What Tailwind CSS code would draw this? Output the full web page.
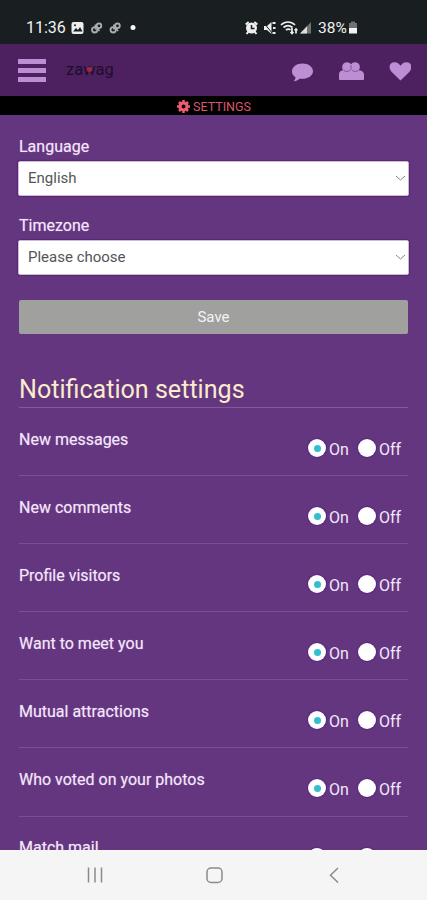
<!DOCTYPE html>
<html lang="en">
<head>
<meta charset="utf-8">
<title>Settings</title>
<script src="https://cdn.jsdelivr.net/npm/@tailwindcss/browser@4"></script>
</head>
<body class="w-[427px] h-[900px] overflow-hidden bg-[#653680] font-[Roboto,sans-serif] text-[#f3e6fa]">
<div class="flex h-[900px] flex-col">
  <div class="flex h-11 shrink-0 items-center bg-[#191e21] pt-[11px] pl-[26px] text-[#f2f2f2]">
    <span class="w-[45px] text-[16px] leading-5 whitespace-nowrap">11:36</span>
    <svg class="h-4 w-[70px] shrink-0" viewBox="0 0 70 16" fill="none">
      <rect x="0.5" y="2" width="12" height="12" rx="2" fill="#eee"/><path d="M2 11.5l3-3.500 2 2 2-3 2.500 4.500z" fill="#191e21"/><circle cx="4" cy="5.200" r="1" fill="#191e21"/>
      <g id="link" stroke="#a9adaf" stroke-width="1.800"><circle cx="23.700" cy="9.800" r="2.700"/><circle cx="28" cy="5.800" r="2.300"/><path d="M24.500 4.500v5M25.500 7.500l3 3.500"/></g>
      <use href="#link" x="18.500"/>
      <circle cx="62" cy="7.500" r="2.500" fill="#f5f5f5"/>
    </svg>
    <svg class="ml-[104px] h-4 w-[70px] shrink-0" viewBox="0 0 70 16" fill="none" stroke="#eee">
      <circle cx="6.500" cy="8" r="5.500" fill="#eee" stroke="none"/><path d="M0.700 4.500l3-2.500M12.300 4.500l-3-2.500M1.500 14l2-2.500M11.500 14l-2-2.500" stroke-width="2"/><path d="M6.500 5v3.500h3" stroke="#191e21" stroke-width="1.500"/>
      <path d="M19 6h3l4.500-4v12L22 10h-3z" fill="#eee" stroke="none"/><path d="M18.500 2.500l9 11" stroke="#191e21" stroke-width="1"/><path d="M27.500 3h3M28 8h2.500M27.500 13h3" stroke-width="2"/>
      <path d="M36 5c4-4 10-4 14 0M38.500 7.500c3-2.500 6-2.500 9 0M41 10c2-1.500 3-1.500 4.500 0M47 8v5.500M45.500 12l1.500 1.500 1.500-1.500M51 13.500V9M49.700 10.500L51 9l1.300 1.500" stroke-width="1.700"/>
      <path d="M55 13.500L66 2v11.500z" fill="#6d7275" stroke="none"/><path d="M55 13.500l7-7.300v7.300z" fill="#ddd" stroke="none"/>
    </svg>
    <span class="ml-[3px] w-[30px] text-[15.5px] leading-5 whitespace-nowrap">38%</span>
    <svg class="h-4 w-2.5 shrink-0" viewBox="0 0 10 16"><path d="M1 3h2V1.500h4V3h2v5H1z" fill="#6d7275"/><path d="M1 8h8v5.500H1z" fill="#f2f2f2"/></svg>
  </div>
  <header class="flex h-[52px] shrink-0 items-center bg-[#4d215f] pr-4 pl-[18px] text-[#be8ed5]">
    <div class="flex flex-col gap-[4px]">
      <i class="h-[5px] w-7 bg-current"></i><i class="h-[5px] w-7 bg-current"></i><i class="h-[5px] w-7 bg-current"></i>
    </div>
    <div class="ml-5 flex items-baseline text-[16.5px] leading-5 text-[#200d2d]">za<span class="relative">w<i class="absolute top-[7px] left-[4px] size-[5px] rounded-full bg-[#a52b30]"></i></span>ag</div>
    <svg class="mt-[5px] ml-auto h-[22px] w-[120px]" viewBox="0 0 120 22" fill="currentColor">
      <path d="M11.500 1.500C5.500 1.500 1 5 1 9.300c0 2.500 1.200 4.500 3.500 6 0 1.500-.7 2.800-1.800 3.900 2.500-.2 4.300-1 5.800-2.500 7.500 1 13.500-2.500 13.500-7.400 0-4.300-4.500-7.800-10.500-7.800z"/>
      <path d="M48 17V12.500c0-2.500 1.500-4 4-4.300-2-3.700 0-8 3.900-8 2 0 3.300.8 4.100 2.100C61 1 62.300.2 64.200.2c4 0 5.800 4.300 3.800 8 3.300.3 5 2 5 4.300V17c0 .7-.5 1-1 1H49c-.6 0-1-.3-1-1z"/>
      <path d="M52.500 8.300c2.300 1.500 4.500 1.500 6.800 0M61 8.300c2.200 1.500 4.500 1.500 6.700 0M60 3v5" fill="none" stroke="#7d4f93" stroke-width=".9"/>
      <path d="M109.500 18.500L101 10.200C96.500 5.500 98.800.3 103.500.3c3 0 4.700 1.700 6 3.500 1.400-1.800 3-3.500 6-3.500 4.800 0 7 5.200 2.500 9.900z"/>
    </svg>
  </header>
  <div class="flex h-[19px] shrink-0 items-center justify-center gap-[3px] bg-black pt-[2px] pl-px text-[12.5px] leading-4 text-[#d9566e]">
    <svg class="size-[13px]" viewBox="0 0 26 26"><circle cx="13" cy="13" r="7" fill="none" stroke="#f15b72" stroke-width="6"/><path d="M13 0v6M13 20v6M0 13h6M20 13h6M4 4l4 4M18 18l4 4M22 4l-4 4M8 18l-4 4" stroke="#f15b72" stroke-width="5"/></svg>
    <span>SETTINGS</span>
  </div>
  <main class="min-h-0 flex-1 overflow-hidden px-[19px] pt-[22px] text-base leading-5">
    <label class="block h-6 [text-shadow:0_0_1px_#f3e6fa80]">Language</label>
    <div class="-mr-px -ml-px flex h-[35px] items-center justify-between rounded-[2px] border border-[#cbbcd3] bg-white pr-[2px] pb-[2px] pl-[9px] text-[15px] text-[#555] shadow-[0_0_2px_#3e0065]"><span>English</span><svg class="h-2 w-[11px]" viewBox="0 0 11 8" fill="none" stroke="#888"><path d="M1 2l4.500 4L10 2"/></svg></div>
    <label class="mt-5 block h-6 [text-shadow:0_0_1px_#f3e6fa80]">Timezone</label>
    <div class="-mr-px -ml-px flex h-[35px] items-center justify-between rounded-[2px] border border-[#cbbcd3] bg-white pr-[2px] pb-[2px] pl-[9px] text-[15px] text-[#555] shadow-[0_0_2px_#3e0065]"><span>Please choose</span><svg class="h-2 w-[11px]" viewBox="0 0 11 8" fill="none" stroke="#888"><path d="M1 2l4.500 4L10 2"/></svg></div>
    <button class="mt-[25px] flex h-[34px] w-full items-center justify-center rounded-[2px] bg-[#a0a09f] text-[15px] text-[#f4f4f4]">Save</button>
    <h1 class="mt-[37px] flex h-[37px] items-center border-b border-[#84599b] pt-px text-[25.1px] leading-8 text-[#faeccb]">Notification settings</h1>
    <div id="rows"></div>
  </main>
  <nav class="flex h-[50px] shrink-0 items-center bg-[#f5f5f5]">
    <svg class="h-[50px] w-[427px]" viewBox="0 0 427 50" fill="none" stroke="#8b8b8b" stroke-width="1.500"><path d="M88.500 17.500v15M95 17.500v15M101.500 17.500v15"/><rect x="207" y="18" width="15" height="14.500" rx="4"/><path d="M338 18l-7.500 7.200 7.500 7.300"/></svg>
  </nav>
</div>
<template id="row">
  <section class="flex h-[68.1px] items-start justify-between border-b border-[#7c4d95] pt-[21px]">
    <span class="pt-[0.6px] [text-shadow:0_0_1px_#f3e6fa80]"></span>
    <div class="mt-[10px] mr-[6px] flex h-[19px] items-start">
      <i class="flex size-[18px] items-center justify-center rounded-full bg-white shadow-[0_0_2px_#3e0065]"><i class="size-[7px] rounded-full bg-[#33bfd0]"></i></i>
      <b class="ml-[3px] w-[29px] pt-px font-normal">On</b>
      <i class="size-[18px] rounded-full bg-white shadow-[0_0_2px_#3e0065]"></i>
      <b class="ml-[3px] w-[23px] pt-px font-normal">Off</b>
    </div>
  </section>
</template>
<script>
for (const name of ['New messages','New comments','Profile visitors','Want to meet you','Mutual attractions','Who voted on your photos','Match mail']) {
  const row = document.getElementById('row').content.cloneNode(true);
  row.querySelector('span').textContent = name;
  document.getElementById('rows').append(row);
}
</script>
</body>
</html>
